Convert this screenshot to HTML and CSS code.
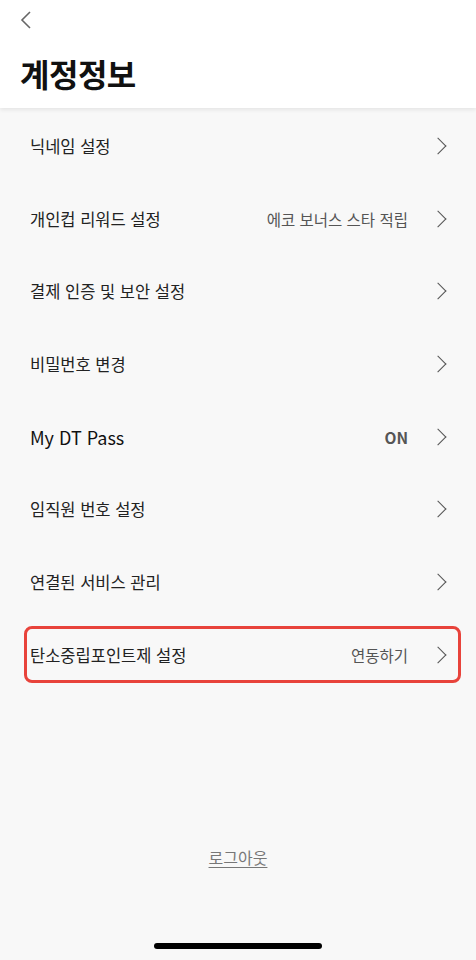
FILE: index.html
```html
<!DOCTYPE html>
<html lang="ko">
<head>
    <meta charset="UTF-8">
    <meta name="viewport" content="width=device-width, initial-scale=1.0">
    <title>계정정보</title>
    <link rel="stylesheet" href="styles.css">
</head>
<body>
    <header class="header">
        <button class="back" aria-label="뒤로">
            <svg width="12" height="20" viewBox="0 0 12 20"><path d="M10 2 L2 10 L10 18" fill="none" stroke="#666" stroke-width="1.6"/></svg>
        </button>
        <h1 class="title">계정정보</h1>
    </header>

    <ul class="menu">
        <li class="row"><span class="label">닉네임 설정</span><span class="chev"></span></li>
        <li class="row"><span class="label">개인컵 리워드 설정</span><span class="value">에코 보너스 스타 적립</span><span class="chev"></span></li>
        <li class="row"><span class="label">결제 인증 및 보안 설정</span><span class="chev"></span></li>
        <li class="row"><span class="label">비밀번호 변경</span><span class="chev"></span></li>
        <li class="row"><span class="label label-en">My DT Pass</span><span class="value value-on">ON</span><span class="chev"></span></li>
        <li class="row"><span class="label">임직원 번호 설정</span><span class="chev"></span></li>
        <li class="row"><span class="label">연결된 서비스 관리</span><span class="chev"></span></li>
        <li class="row row-marked"><span class="label">탄소중립포인트제 설정</span><span class="value">연동하기</span><span class="chev"></span></li>
    </ul>

    <div class="logout"><a href="#">로그아웃</a></div>
    <div class="home-bar"></div>
</body>
</html>
```

FILE: styles.css
```css
body {
    font-family: "Noto Sans CJK KR", "Noto Sans", sans-serif;
    background-color: #f8f8f8;
    color: #222;
    margin: 0;
    width: 476px;
    height: 960px;
    display: flex;
    flex-direction: column;
    overflow: hidden;
}
.header {
    background-color: #fff;
    height: 108px;
    box-sizing: border-box;
    padding: 8px 0 0 20px;
    box-shadow: 0 2px 4px rgba(0, 0, 0, 0.08);
    position: relative;
    z-index: 1;
}
.back {
    border: none;
    background: none;
    padding: 0;
    width: 14px;
    height: 24px;
    display: flex;
    align-items: center;
}
.title {
    margin: 21px 0 0;
    font-size: 32px;
    font-weight: 700;
    line-height: 40px;
    color: #111;
    letter-spacing: -0.5px;
}
.menu {
    list-style: none;
    margin: 0;
    padding: 2px 0 0;
}
.row {
    height: 72.6px;
    display: flex;
    align-items: center;
    padding: 0 30px;
    box-sizing: border-box;
}
.label {
    flex: 1;
    font-size: 16.5px;
    color: #222;
}
.label-en {
    font-size: 18px;
    font-weight: 400;
    color: #111;
}
.value {
    font-size: 15.5px;
    color: #555;
    margin-right: 24px;
}
.value-on {
    font-weight: 700;
}
.chev {
    width: 12px;
    height: 12px;
    border-top: 1.6px solid #555;
    border-right: 1.6px solid #555;
    transform: rotate(45deg);
    margin-right: 2px;
    box-sizing: border-box;
}
.row-marked {
    margin: 8px 15px 0 24px;
    padding: 0 12px 0 3px;
    height: 57px;
    border: 3px solid #e8433b;
    border-radius: 8px;
}
.logout {
    margin-top: auto;
    text-align: center;
    margin-bottom: 74px;
}
.logout a {
    color: #777;
    font-size: 16px;
    text-decoration: underline;
    text-underline-offset: 3px;
}
.home-bar {
    width: 168px;
    height: 6px;
    border-radius: 3px;
    background-color: #000;
    margin: 0 auto 11px;
}
```
